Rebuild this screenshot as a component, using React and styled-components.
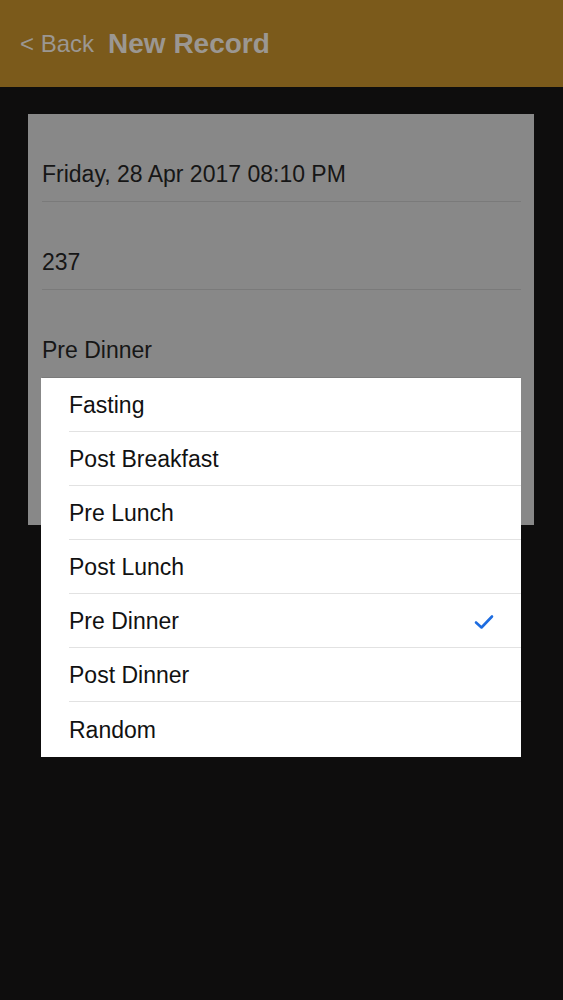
import React from 'react';
import styled, { createGlobalStyle } from 'styled-components';

const GlobalStyle = createGlobalStyle`
  html, body {
    margin: 0;
    padding: 0;
    background: #0e0d0d;
    font-family: "Liberation Sans", Arial, sans-serif;
  }
`;

const Screen = styled.div`
  width: 563px;
  height: 1000px;
  background: #0e0d0d;
  display: flex;
  flex-direction: column;
`;

const NavBar = styled.div`
  height: 87px;
  background: #7b5a1b;
  display: flex;
  align-items: center;
  padding-left: 20px;
  box-sizing: border-box;
  color: #9b9792;
`;

const BackLink = styled.span`
  font-size: 24px;
  margin-right: 14px;
  margin-top: 1px;
`;

const Title = styled.span`
  font-size: 28px;
  font-weight: bold;
`;

const Body = styled.div`
  position: relative;
  padding: 27px 29px 0 28px;
`;

const Card = styled.div`
  background: #888888;
  height: 411px;
  padding: 0 13px 0 14px;
  box-sizing: border-box;
`;

const Field = styled.div`
  height: 88px;
  display: flex;
  align-items: flex-end;
  padding-bottom: 13px;
  box-sizing: border-box;
  border-bottom: 1px solid #7a7a7a;
  font-size: 23px;
  color: #161616;
`;

const Menu = styled.ul`
  position: absolute;
  top: 291px;
  left: 41px;
  width: 480px;
  margin: 0;
  padding: 0;
  list-style: none;
  background: #ffffff;
`;

const Option = styled.li`
  height: ${p => (p.last ? '55px' : '54px')};
  margin-left: 28px;
  padding-right: 27px;
  padding-top: 2px;
  display: flex;
  align-items: center;
  justify-content: space-between;
  font-size: 23px;
  color: #111111;
  border-bottom: ${p => (p.last ? 'none' : '1px solid #e2e2e2')};
  box-sizing: border-box;
`;

const Check = () => (
  <svg width="20" height="16" viewBox="0 0 20 16">
    <path d="M2 8.5 L7.5 13.5 L18 2.5" fill="none" stroke="#1d6ce0" strokeWidth="2.6" strokeLinecap="round" strokeLinejoin="round" />
  </svg>
);

const options = ['Fasting', 'Post Breakfast', 'Pre Lunch', 'Post Lunch', 'Pre Dinner', 'Post Dinner', 'Random'];

export default function App() {
  const selected = 'Pre Dinner';
  return (
    <Screen>
      <GlobalStyle />
      <NavBar>
        <BackLink>&lt; Back</BackLink>
        <Title>New Record</Title>
      </NavBar>
      <Body>
        <Card>
          <Field>Friday, 28 Apr 2017 08:10 PM</Field>
          <Field>237</Field>
          <Field>Pre Dinner</Field>
        </Card>
        <Menu>
          {options.map((o, i) => (
            <Option key={o} last={i === options.length - 1}>
              {o}
              {o === selected && <Check />}
            </Option>
          ))}
        </Menu>
      </Body>
    </Screen>
  );
}
